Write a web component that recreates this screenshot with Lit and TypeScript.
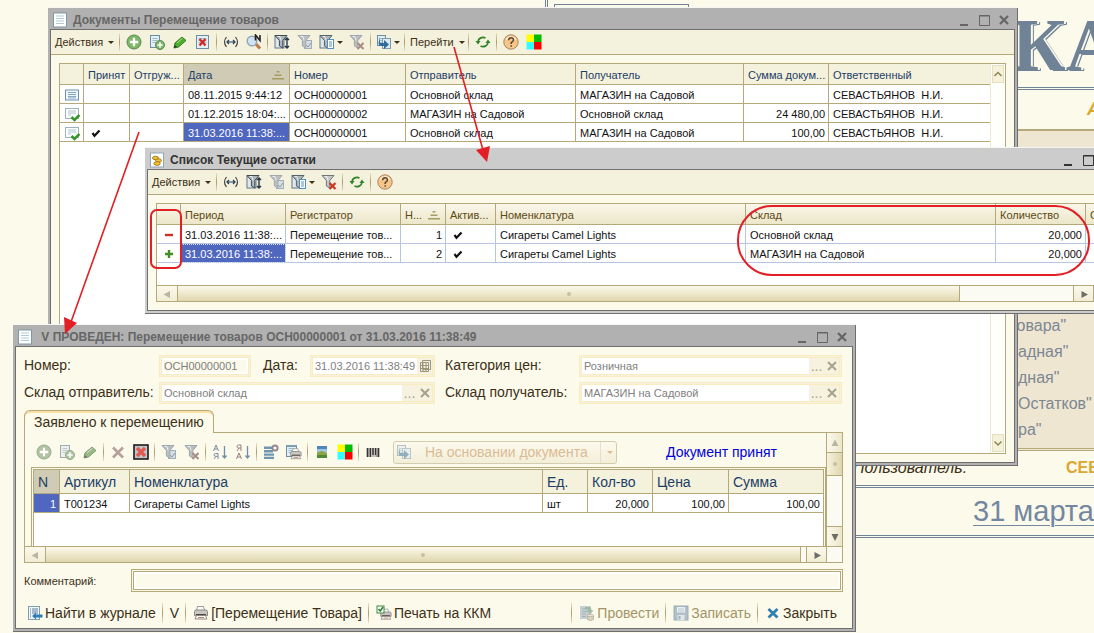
import { LitElement, html, svg, css, nothing, TemplateResult } from "lit";
import { customElement, property } from "lit/decorators.js";
import { classMap } from "lit/directives/class-map.js";

const funnel = (fill: string, stroke: string) => svg`
  <path d="M1 1.5h12L8.8 6.5v7.5l-3.4-2V6.500z" fill=${fill} stroke=${stroke}/>
  <path d="M3.500 2.500h2.500l1 4" stroke="#fff" stroke-opacity=".7" fill="none"/>`;
const plusDisc = (cx: number, cy: number, r: number) => svg`
  <circle cx=${cx} cy=${cy} r=${r} fill="#7db767" stroke="#5a8a50"/>
  <path d="M${cx - r * 0.6} ${cy}h${r * 1.2}M${cx} ${cy - r * 0.6}v${r * 1.2}" stroke="#fff" stroke-width=${r / 3}/>`;
const sheet = (x: number, y: number, w: number, h: number) => svg`
  <rect x=${x} y=${y} width=${w} height=${h} fill="#e3eef5" stroke="#6d8da3"/>
  <path d="M${x + 2} ${y + 3}h${w - 4}M${x + 2} ${y + 5}h${w - 4}M${x + 2} ${y + 7}h${w - 4}" stroke="#9db9cc"/>`;
const printer = svg`
  <path d="M4.500 1.500h6l1 4h-8z" fill="#fff" stroke="#999"/>
  <path d="M1.500 6.500q0-1.500 2-1.500h9q2 0 2 1.500v4h-13z" fill="#c9c6c2" stroke="#8d8883"/>
  <path d="M3 9h10v1.500H3z" fill="#4a4542"/>
  <path d="M3.500 10.500h9l1.500 3.500H2z" fill="#fff" stroke="#8d8883"/><path d="M5 12.500h6" stroke="#c08060"/>`;

const ICONS: Record<string, TemplateResult> = {
  add: svg`${plusDisc(8, 8, 7)}`,
  addCopy: svg`${sheet(1.5, 1.5, 9, 12)}${plusDisc(11, 11, 4.5)}`,
  pencil: svg`<path d="M2 14l1-5L10 3l4 3.500-7.500 6.500z" fill="#4fae2c" stroke="#2d7a1a"/><path d="M2 14l1-3 2 2z" fill="#333"/><path d="M5 9l5.500-5" stroke="#b5e69a"/>`,
  removeDoc: svg`${sheet(1.5, 1.5, 12, 13)}<path d="M4.500 5l6 6.500M10.500 5l-6 6.500" stroke="#d22a22" stroke-width="2.400"/>`,
  remove: svg`<path d="M3 3.500l10 10M13 3.500l-10 10" stroke="#b5a09a" stroke-width="2.600"/>`,
  removeBoxed: svg`<rect x="1" y="1" width="14" height="14" fill="#c3c3c8" stroke="#1c1c1c" stroke-width="1.600"/><path d="M4 4l8 8M12 4l-8 8" stroke="#e25a50" stroke-width="3.400"/>`,
  interval: svg`<path d="M3.500 3Q-.5 8 3.500 13M12.500 3q4 5 0 10" fill="none" stroke="#444" stroke-width="1.200"/><path d="M4 8h8M6 6L4 8l2 2M10 6l2 2-2 2" fill="none" stroke="#24405c" stroke-width="1.200"/>`,
  search: svg`<path d="M10 10l4 4.500" stroke="#bf7a48" stroke-width="3"/><circle cx="6" cy="7" r="4.800" fill="#d2e4f4" stroke="#93a5b5" stroke-width="1.400"/><path d="M9.500 6.500V1l4.500 5.500V1" fill="none" stroke="#222" stroke-width="1.600"/>`,
  filterList: svg`<rect x="1" y="2" width="9" height="12" fill="#dfe8ee" stroke="#647887"/>${funnel("#aeb6bb", "#3f4a52")}<path d="M13 4v10M11 6l2-2 2 2M11 12l2 2 2-2" fill="none" stroke="#24384a" stroke-width="1.400"/>`,
  filterBy: svg`<rect x="7.500" y="6.500" width="7" height="8" fill="#d4dde2" stroke="#a3afb7"/><path d="M9 11l2 2 3-4" fill="none" stroke="#8c9aa3"/>${funnel("#b9bfc2", "#a1a8ad")}`,
  filterHistory: svg`<rect x="1" y="2" width="8" height="12" fill="#dfe8ee" stroke="#647887"/>${funnel("#aeb6bb", "#56626a")}<rect x="8.500" y="5.500" width="6" height="9" fill="#fff" stroke="#5590bd"/><path d="M10 8h3M10 10h3M10 12h3" stroke="#5590bd"/>`,
  filterOff: svg`${funnel("#b9bec1", "#a1a6aa")}<path d="M8.500 9l6 6M14.500 9l-6 6" stroke="#a88c86" stroke-width="2"/>`,
  filterOffRed: svg`${funnel("#c4c8ca", "#70787c")}<path d="M8.500 9l6 6M14.500 9l-6 6" stroke="#cf3526" stroke-width="2.200"/>`,
  createOn: svg`${sheet(1.5, 1.5, 8, 10)}<rect x="6.500" y="4.500" width="8" height="10" fill="#dce9f2" stroke="#7f9db0"/><path d="M4 3v6h4V6l5 4.500L8 15v-3H3.500L2.500 9z" fill="#2f6c9d"/>`,
  refresh: svg`<path d="M3 7.500A5 4.500 0 0 1 10.500 4M13 8.500A5 4.500 0 0 1 5.500 12" fill="none" stroke="#2f8428" stroke-width="1.700"/><path d="M.5 7h5L3 10.500zM10.500 9h5L13 5.500z" fill="#2f8428"/>`,
  help: svg`<circle cx="8" cy="8" r="7.200" fill="#f6c588" stroke="#a98562"/><path d="M3 5.500Q8 0 13 5.500" fill="none" stroke="#fdebce" stroke-width="1.500"/><path d="M5.700 6.200q0-2.500 2.400-2.500t2.300 2.200Q10.400 7.300 8.200 8.600V10M8.200 11.200v1.600" fill="none" stroke="#5b4638" stroke-width="1.500"/>`,
  squares: svg`<path d="M.5.5H8V8H.5z" fill="#ff0"/><path d="M8 .5h7.500V8H8z" fill="#0b0"/><path d="M.5 8H8v7.500H.5z" fill="#3ff"/><path d="M8 8h7.500v7.500H8z" fill="#f00"/>`,
  sortAsc: svg`<path d="M1.500 7L4 1l2.500 6M2.500 5h3M6 15V9.500H3.500a1.400 1.400 0 0 0 0 2.800H6M4 12.300L2 15" fill="none" stroke="#7c8aa0"/><path d="M12.500 2v12M10.500 11.500l2 2.500 2-2.500" fill="none" stroke="#6f8fa8" stroke-width="1.300"/>`,
  sortDesc: svg`<path d="M1.500 15L4 9l2.500 6M2.500 13h3M6 7V1H3.500a1.400 1.400 0 0 0 0 3H6M4 4L2 7" fill="none" stroke="#9a7f82"/><path d="M12.500 2v12M10.500 11.500l2 2.500 2-2.500" fill="none" stroke="#6f8fa8" stroke-width="1.300"/>`,
  listSetup: svg`<path d="M1 2.500h9v2.500H1zM1 6h9v2.500H1zM1 9.500h10v2.200H1zM1 12.700h10v2.200H1z" fill="#6f95b2"/><circle cx="12" cy="4" r="2.600" fill="#fff" stroke="#95888f" stroke-width="2"/>`,
  printList: svg`${sheet(0.5, 1.5, 10, 11)}<path d="M0 1h11v2H0z" fill="#7f9db0"/><g transform="translate(3.500 3.500) scale(.8)">${printer}</g>`,
  picture: svg`<rect x="3" y="2" width="10" height="12" fill="#9cc6e6"/><path d="M3 2h10v3H3z" fill="#4f86b8"/><path d="M3 9h10v5H3z" fill="#4d8a33"/><path d="M3 8.500l5-1.500 5 2v2H3z" fill="#8ca544"/>`,
  barcode: svg`<path d="M2.500 4v9M5.500 4v9M8 4v7M10.500 4v7M13.500 4v9" stroke="#333" stroke-width="1.600"/><path d="M4 4v9M12 4v9M7 12h5" stroke="#333" stroke-width=".6"/>`,
  find: svg`<rect x="1.500" y="1.500" width="11" height="13" fill="#f1f7fb" stroke="#7f9db0"/><path d="M3 4h1M5 4h6M3 6h1M5 6h6M3 8h1M5 8h6M3 10h1M3 12h1" stroke="#5c7f99"/><path d="M5 11l4-3.500v2h6.500v3H9v2z" fill="#2f7fb5"/>`,
  printer,
  printKkm: svg`<g transform="translate(3.500 3) scale(.8)">${printer}</g><rect x="1" y="1" width="7" height="7" fill="#fff" stroke="#3a8a3a"/><path d="M2.500 4l1.700 2L7 2" fill="none" stroke="#2d7a2d" stroke-width="1.500"/>`,
  post: svg`<rect x="1" y="1" width="11" height="13" fill="#b9c6cf"/><path d="M3 4h5M3 6.500h5M3 9h4M3 11.500h4" stroke="#8fa2af"/><path d="M6 2h4q2.500 0 2.500 3.500h2L11 9 7.500 5.500h2q0-1.500-3.500-1.500z" fill="#8ba890"/><path d="M8.500 10.500v4q3 2 6 0v-4z" fill="#d3cdbb" stroke="#aaa590"/><ellipse cx="11.500" cy="10.500" rx="3" ry="1.300" fill="#e6e2d4" stroke="#aaa590"/>`,
  save: svg`<rect x="1" y="1" width="14" height="14" fill="#9db2c3" stroke="#8398a8"/><path d="M4 2h8v5.500H4z" fill="#e6edf1"/><path d="M5 4h6M5 6h6" stroke="#a9bccb"/><path d="M4.500 10h7v5h-7z" fill="#dde2e6"/><path d="M5.500 11h2v3.500h-2z" fill="#8da0b0"/>`,
  close: svg`<path d="M3.500 4l9 8.500M12.500 4l-9 8.500" stroke="#2f7fb0" stroke-width="2.800"/>`,
  docList: svg`<rect x="1.500" y="3" width="13" height="10" fill="#eef6fb" stroke="#6f93ad"/><path d="M4 5.500h8M4 7.500h8M4 9.500h8M4 11h8" stroke="#7aa0bd" stroke-width=".9"/>`,
  docPosted: svg`<rect x="1.500" y="2.500" width="13" height="10" fill="#fbfdfe" stroke="#9fb3bf"/><path d="M4 5h8M4 7h8M4 9h3" stroke="#a9bfcc" stroke-width=".9"/><path d="M7.500 11l3 3L15.500 9" fill="none" stroke="#38962a" stroke-width="2.600"/>`,
  paper: svg`<rect x="1.500" y="1" width="13" height="14" fill="#fdfefe" stroke="#7f98a8"/><path d="M4 4h8M4 6.500h8M4 9h8M4 11.500h8" stroke="#b5c8d5"/>`,
  coins: svg`<rect x="1.500" y="1" width="13" height="14" fill="#fff" stroke="#8fa5b5"/><ellipse cx="6.500" cy="6" rx="3" ry="1.700" fill="#f3c33a" stroke="#a87b14"/><ellipse cx="9.500" cy="8.500" rx="3" ry="1.700" fill="#f3c33a" stroke="#a87b14"/><ellipse cx="8" cy="11.500" rx="3.200" ry="1.800" fill="#f3c33a" stroke="#a87b14"/>`,
  tick: svg`<path d="M4.500 8l2 2.800L11.500 5.500" fill="none" stroke="#111" stroke-width="2.200"/>`,
  minus: svg`<path d="M4 8h8" stroke="#cf2f22" stroke-width="2.400"/>`,
  plus: svg`<path d="M4 8h8M8 4v8" stroke="#3f8f24" stroke-width="2.400"/>`,
  sort: svg`<path d="M6.500 4h3v1.500h-3zM4.500 7.500h7V9h-7zM2 11h12v1.500H2z" fill="#a69c62"/>`,
  calendar: svg`<path d="M5.500 2.500h8v9h-8zM3.500 4.500h8v9h-8zM3.500 7.500h8M3.500 10.500h8M6 4.500v9M9 4.500v9" fill="none" stroke="#98957c"/>`,
  clear: svg`<path d="M4 4l8 8M12 4l-8 8" stroke="#a5a289" stroke-width="2"/>`,
  minimize: svg`<path d="M4 13h8" stroke="currentColor" stroke-width="2"/>`,
  maximize: svg`<path d="M3.500 3.500h10v10h-10zM3 4h11" fill="none" stroke="currentColor"/>`,
  closeWin: svg`<path d="M4 4l8 8M12 4l-8 8" stroke="currentColor" stroke-width="2.200"/>`,
  up: svg`<path d="M4.500 10L8 6.500l3.500 3.500" fill="none" stroke="#8f8657" stroke-width="1.500"/>`,
  down: svg`<path d="M4.500 6.500L8 10l3.500-3.500" fill="none" stroke="#8f8657" stroke-width="1.500"/>`,
  triLeft: svg`<path d="M11 5v7L4.500 8.500z" fill="#b9b59f"/>`,
  triRight: svg`<path d="M5.500 5v7L12 8.500z" fill="#6d6d68"/>`,
  triUp: svg`<path d="M4.500 11h7L8 4.500z" fill="#b9b59f"/>`,
  triDown: svg`<path d="M4.500 5h7L8 12z" fill="#6d6d68"/>`,
};

const icon = (name: string) =>
  html`<svg class="icon" viewBox="0 0 16 16" width="16" height="16" aria-hidden="true">${ICONS[name]}</svg>`;

const base = css`
  * { box-sizing: border-box; }
  .icon { display: block; flex: none; }
  button { font: inherit; color: inherit; background: none; border: 0; padding: 0; margin: 0; }
`;

@customElement("desk-window")
class DeskWindow extends LitElement {
  @property() heading = "";
  @property() glyph = "paper";
  @property({ type: Boolean }) active = false;

  static styles = [base, css`
    :host { display: flex; flex-direction: column; box-sizing: border-box; color: #666;
      background: #b1b1b1; border: solid #6f6f6f; border-width: 0 1px 1px 0; padding: 0 2px 2px; box-shadow: 0 -1px #f6f6f4; }
    :host([active]) { background: #ccc; color: #333; }
    .bar { display: flex; align-items: center; height: 21px; padding: 2px 3px 0 2px; gap: 5px; }
    h2 { flex: 1; margin: 0; font: bold 12px/16px "Liberation Sans", sans-serif; white-space: pre; overflow: hidden; }
    .controls { display: flex; gap: 4px; }
    .body { flex: 1; display: flex; flex-direction: column; background: #fcfaeb; border: 1px solid #6f6f6f; min-height: 0; }
  `];

  render() {
    return html`
      <header class="bar">
        ${icon(this.glyph)}
        <h2>${this.heading}</h2>
        <div class="controls">
          <button aria-label="Свернуть">${icon("minimize")}</button>
          <button aria-label="Развернуть">${icon("maximize")}</button>
          <button aria-label="Закрыть">${icon("closeWin")}</button>
        </div>
      </header>
      <div class="body"><slot></slot></div>`;
  }
}

type Cell = string | TemplateResult | typeof nothing;
interface Column { title: Cell; width?: number; right?: boolean; sorted?: boolean; }

const DOC_COLUMNS: Column[] = [
  { title: "", width: 24 }, { title: "Принят", width: 46 }, { title: "Отгруж...", width: 54 },
  { title: "Дата", width: 106, sorted: true }, { title: "Номер", width: 116 },
  { title: "Отправитель", width: 170 }, { title: "Получатель", width: 168 },
  { title: "Сумма докум...", width: 85, right: true }, { title: "Ответственный" },
];
const DOCS: Cell[][] = [
  [icon("docList"), "", "", "08.11.2015 9:44:12", "ОСН00000001", "Основной склад", "МАГАЗИН на Садовой", "", "СЕВАСТЬЯНОВ  Н.И."],
  [icon("docPosted"), "", "", "01.12.2015 18:04:...", "ОСН00000002", "МАГАЗИН на Садовой", "Основной склад", "24 480,00", "СЕВАСТЬЯНОВ  Н.И."],
  [icon("docPosted"), icon("tick"), "", "31.03.2016 11:38:...", "ОСН00000001", "Основной склад", "МАГАЗИН на Садовой", "100,00", "СЕВАСТЬЯНОВ  Н.И."],
];
const STOCK_COLUMNS: Column[] = [
  { title: "", width: 24 }, { title: "Период", width: 105 }, { title: "Регистратор", width: 115 },
  { title: "Н...", width: 45, right: true, sorted: true }, { title: "Актив...", width: 50 },
  { title: "Номенклатура", width: 250 }, { title: "Склад", width: 250 },
  { title: "Количество", width: 90, right: true }, { title: "С" },
];
const STOCK: Cell[][] = [
  [icon("minus"), "31.03.2016 11:38:...", "Перемещение тов...", "1", icon("tick"), "Сигареты Camel Lights", "Основной склад", "20,000", ""],
  [icon("plus"), "31.03.2016 11:38:...", "Перемещение тов...", "2", icon("tick"), "Сигареты Camel Lights", "МАГАЗИН на Садовой", "20,000", ""],
];
const ITEM_COLUMNS: Column[] = [
  { title: "N", width: 26, right: true, sorted: true }, { title: "Артикул", width: 70 }, { title: "Номенклатура" },
  { title: "Ед.", width: 45 }, { title: "Кол-во", width: 65, right: true },
  { title: "Цена", width: 76, right: true }, { title: "Сумма", width: 94, right: true },
];
const ITEMS: Cell[][] = [["1", "Т001234", "Сигареты Camel Lights", "шт", "20,000", "100,00", "100,00"]];

@customElement("app-root")
class AppRoot extends LitElement {
  static styles = [base, css`
    :host { display: block; position: relative; overflow: hidden; height: 100vh; background: #fcfaeb;
      font: 11px/16px "Liberation Sans", Arial, sans-serif; color: #111; }

    .home { margin-left: 545px; border-left: 3px double #708396; height: 540px; white-space: nowrap; overflow: hidden; color: #7d8794; }
    .home-row { display: grid; align-items: center; overflow: hidden; }
    .brand { grid-template-columns: 6px 135px 323px 1fr; height: 90px; border-bottom: 3px double #708396; }
    .frame { grid-column: 2; align-self: end; height: 86px; border: solid #708396; border-width: 1px 1px 0; }
    .logo { grid-column: 4; font: bold 74px/90px "Liberation Serif", serif; color: #708396; text-shadow: 2px 0 #fcfaeb, 3px 1px #708396; }
    .caption { padding-left: 539px; height: 39px; font: italic bold 18px/39px "Liberation Sans", sans-serif; color: #dca630; }
    .links { margin: 0; list-style: none; padding: 182px 0 5px 470px; height: 322px; background: #eee6d0;
      border: solid #b5a97a; border-width: 2px 0; border-bottom: 3px double #b5a97a; font-size: 16px; line-height: 26px; }
    .tucked { margin-left: -10px; }
    .user { grid-template-columns: 213px 1fr; padding-left: 305px; height: 37px; border-bottom: 3px double #708396; }
    .user em { font-size: 16px; color: #3c3018; }
    .user b { font-size: 16px; color: #dca630; }
    .day { padding-left: 425px; height: 50px; border-bottom: 3px double #708396; }
    .day a { font-size: 29px; line-height: 46px; color: #7487a0; text-underline-offset: 4px; text-decoration-thickness: 1px; }

    desk-window { position: absolute; }
    .docs { left: 48px; top: 8px; width: 970px; height: 458px; }
    .stock { left: 145px; top: 148px; right: -28px; }
    .doc { left: 13px; top: 325px; width: 843px; }
    .marks { position: absolute; left: 0; top: 0; pointer-events: none; }

    .toolbar { display: flex; align-items: center; height: 25px; padding-left: 4px; background: #f4f1dc; border-bottom: 1px solid #b5a97a; color: #3c3018; }
    .tool { display: flex; align-items: center; justify-content: center; width: 23px; height: 22px; }
    .tool.drop { width: 29px; }
    .menu { display: flex; align-items: center; gap: 3px; white-space: nowrap; }
    .menu.actions { width: 60px; }
    .menu.go { width: 53px; margin: 0 3px; }
    .caret { flex: none; border: solid transparent; border-width: 3px 3px 0; border-top-color: currentColor; margin-left: 2px; }
    .sep { flex: none; width: 1px; height: 18px; margin: 0 2px; background: linear-gradient(#e8e2c4, #a79b6a, #e8e2c4); }
    .actions + .sep { margin-left: 4px; }
    .plain { background: none; border: 0; height: 34px; padding: 4px 0 0 7px; }
    .muted { opacity: .7; filter: saturate(.5); }

    .box { display: flex; margin: 8px; border: 1px solid #b5a97a; background: #fff; min-height: 0; }
    .docs .box { flex: 1; }
    .scroll { flex: 1; min-width: 0; background: #fff; }
    table { width: 100%; table-layout: fixed; border-collapse: separate; border-spacing: 0; color: #111; }
    th, td { border: solid #b5a97a; border-width: 0 1px 1px 0; padding: 1px 3px 0 4px; height: 19px; line-height: 16px; overflow: hidden; white-space: pre; text-align: left; font-weight: normal; }
    th { height: 21px; background: #f4f1dc; color: #1c3d66; }
    th:last-child, td:last-child { border-right: 0; }
    td.right { text-align: right; }
    th .head { display: flex; justify-content: space-between; align-items: center; }
    th.sorted { background: #cfcbb5; }
    td.sel { background: #5067c0; color: #fff; }
    .stock th { background: linear-gradient(#faf7ea, #ece6c9); color: #5c4a14; }
    .stock td { border-color: #b4c6e2; }
    .stock .sel { outline: 1px dotted #dfe4f5; outline-offset: -1px; }

    .rail { display: flex; flex-direction: column; justify-content: space-between; width: 15px; padding: 1px; border-left: 1px solid #eee9d0; background: #fffffc; }
    .rail button { height: 18px; display: flex; justify-content: center; align-items: center; background: #f5f1db; border: 1px solid #e5dfbd; overflow: hidden; }

    .stock .box { flex-direction: column; height: 99px; }
    .hbar { display: flex; height: 16px; border-top: 1px solid #b5a97a; background: #fbfaf3; }
    .hbar button { width: 21px; display: flex; align-items: center; justify-content: center; border: solid #b5a97a; border-width: 0 1px 0 0; background: linear-gradient(#fbf9ec, #f1ecd4); }
    .hbar .end { border-width: 0 1px; }
    .thumb { display: flex; align-items: center; justify-content: center; border: solid #b5a97a; border-width: 0 1px 0 0; background: linear-gradient(#faf8ec, #efe9cc 50%, #ded6ae); }
    .thumb::after { content: ""; width: 4px; height: 4px; border-radius: 2px; background: #c9c19c; }
    .thumb.main { flex: 1; }
    .stock .gap { width: 113px; }
    .corner { width: 15px; }

    .form { display: grid; grid-template-columns: 135px 276px 144px 1fr; grid-auto-rows: 22px; row-gap: 5px; padding: 8px 10px 6px 8px; font-size: 14px; color: #3c3018; }
    .form label { line-height: 20px; white-space: nowrap; }
    .form .far { padding-left: 10px; }
    .pair { display: flex; justify-content: space-between; }
    .field { display: flex; align-items: center; border: 3px double #f9edc0; background: #f6f2df; min-width: 0; }
    .field input { flex: 1; align-self: stretch; min-width: 0; border: 0; margin: 0; padding: 0 2px; background: #fff; font: 11px/16px "Liberation Sans", sans-serif; color: #808080; }
    .field button { color: #a5a289; width: 15px; line-height: 12px; font-size: 14px; }
    .field.number { width: 92px; }
    .field.number input { background: #fcfaeb; box-shadow: inset 0 0 0 2px #fff; }
    .field.date { width: 125px; }

    .tab { align-self: flex-start; margin: 0 0 -1px 8px; height: 23px; padding: 0 9px; border: 1px solid #b5a97a; border-bottom: 0; border-radius: 6px 6px 0 0; background: #fcfaeb; box-shadow: inset 0 2px #f8dfa4; font-size: 14px; color: #3c3018; line-height: 22px; position: relative; }
    .pane { margin: 0 9px 0 8px; border: 1px solid #b5a97a; }
    .pane-main { display: flex; }
    .pane-left { flex: 1; min-width: 0; }
    .items { margin-left: 6px; height: 79px; border: solid #b5a97a; border-width: 1px 1px 0; padding: 1px 1px 0; background: #fcfaeb; }
    .items-in { height: 77px; border: solid #b5a97a; border-width: 1px 1px 0; background: #fff; }
    .items th { height: 24px; font-size: 14px; }
    .vbar { width: 16px; display: flex; flex-direction: column; border-left: 1px solid #b5a97a; background: #fbfaf3; }
    .vbar button { height: 20px; display: flex; align-items: center; justify-content: center; border-bottom: 1px solid #b5a97a; background: linear-gradient(90deg, #fbf9ec, #ece6c9); overflow: hidden; }
    .vbar .thumb { height: 23px; border-width: 0 0 1px; background: linear-gradient(90deg, #f6f2dc, #ded6ae); }
    .vbar .last { margin-top: auto; border: 0; border-top: 1px solid #b5a97a; }
    .doc .gap { width: 5px; }
    .based { display: flex; align-items: center; width: 224px; height: 23px; margin-left: 9px; border: 1px solid #d3cdb0; border-radius: 3px; color: #dcbb94; font-size: 14px; background: linear-gradient(#fcfaee, #f3eed8); padding-left: 2px; }
    .based .icon { opacity: .5; }
    .based .text { flex: 1; padding-left: 13px; text-align: left; white-space: nowrap; }
    .based .arrow { width: 16px; height: 21px; border-left: 1px solid #e6e0c8; display: flex; align-items: center; justify-content: center; }
    .state { margin-left: 49px; font-size: 14px; color: #0000e0; }

    .comment { display: grid; grid-template-columns: 107px 1fr; align-items: center; padding: 6px 9px 0 8px; color: #3c3018; }
    .comment input { height: 23px; width: 100%; border: 3px double #b5a97a; margin: 0; background: #fcfaeb; box-shadow: inset 0 0 0 2px #fff; font: inherit; padding: 0 4px; }
    .footer { display: flex; align-items: center; height: 36px; padding: 6px 15px 0 11px; font-size: 14px; color: #3c3018; }
    .footer button { display: flex; align-items: center; gap: 2px; white-space: nowrap; }
    .footer .sep { margin: 0 7px 0 6px; height: 20px; }
    .footer .off { color: #a39567; }
    .footer .off .icon { opacity: .8; }
    .push { margin-left: auto; }
  `];

  private tool(name: string, label: string, o: { drop?: boolean; muted?: boolean } = {}) {
    return html`<button class=${classMap({ tool: true, drop: !!o.drop, muted: !!o.muted })} aria-label=${label}>
      ${icon(name)}${o.drop ? html`<span class="caret"></span>` : nothing}</button>`;
  }

  private sep() { return html`<span class="sep"></span>`; }

  private grid(columns: Column[], rows: Cell[][], selected: [number, number]) {
    return html`<table>
      <colgroup>${columns.map((c) => html`<col width=${c.width ?? nothing}>`)}</colgroup>
      <thead><tr>${columns.map((c) => html`<th class=${classMap({ sorted: !!c.sorted })}>${
        c.sorted && c.title !== "N" ? html`<span class="head">${c.title}${icon("sort")}</span>` : c.title}</th>`)}</tr></thead>
      <tbody>${rows.map((r, y) => html`<tr>${r.map((cell, x) => html`<td class=${classMap({
        right: !!columns[x].right, sel: y === selected[0] && x === selected[1] })}>${cell}</td>`)}</tr>`)}</tbody>
    </table>`;
  }

  private hbar() {
    return html`<div class="hbar">
      <button aria-label="Влево">${icon("triLeft")}</button><div class="thumb main"></div><div class="gap"></div>
      <button class="end" aria-label="Вправо">${icon("triRight")}</button><div class="corner"></div></div>`;
  }

  private home() {
    return html`<main class="home">
      <div class="home-row brand"><div class="frame"></div><div class="logo">КА</div></div>
      <div class="caption">А</div>
      <ul class="links">
        <li class="tucked">Товара"</li><li>адная"</li><li>дная"</li><li>Остатков"</li><li>ра"</li>
      </ul>
      <div class="home-row user"><em>Пользователь:</em><b>СЕВ</b></div>
      <div class="day"><a href="#day">31 марта</a></div>
    </main>`;
  }

  private docs() {
    return html`<desk-window class="docs" heading="Документы Перемещение товаров">
      <div class="toolbar">
        <button class="menu actions">Действия<span class="caret"></span></button>${this.sep()}
        ${this.tool("add", "Добавить")}${this.tool("addCopy", "Скопировать")}${this.tool("pencil", "Изменить")}${this.tool("removeDoc", "Удалить")}
        ${this.sep()}${this.tool("interval", "Интервал")}${this.tool("search", "Поиск по номеру")}
        ${this.sep()}${this.tool("filterList", "Отбор")}${this.tool("filterBy", "Отбор по значению")}${this.tool("filterHistory", "История отборов", { drop: true })}${this.tool("filterOff", "Отключить отбор")}
        ${this.sep()}${this.tool("createOn", "Ввести на основании", { drop: true })}
        ${this.sep()}<button class="menu go">Перейти<span class="caret"></span></button>
        ${this.sep()}${this.tool("refresh", "Обновить")}${this.sep()}${this.tool("help", "Справка")}${this.tool("squares", "Цвета")}
      </div>
      <div class="box">
        <div class="scroll">${this.grid(DOC_COLUMNS, DOCS, [2, 3])}</div>
        <div class="rail"><button aria-label="Вверх">${icon("up")}</button><button aria-label="Вниз">${icon("down")}</button></div>
      </div>
    </desk-window>`;
  }

  private stock() {
    return html`<desk-window class="stock" active glyph="coins" heading="Список Текущие остатки">
      <div class="toolbar">
        <button class="menu actions">Действия<span class="caret"></span></button>${this.sep()}
        ${this.tool("interval", "Интервал")}${this.tool("filterList", "Отбор")}${this.tool("filterBy", "Отбор по значению")}${this.tool("filterHistory", "История отборов", { drop: true })}${this.tool("filterOffRed", "Отключить отбор")}
        ${this.sep()}${this.tool("refresh", "Обновить")}${this.sep()}${this.tool("help", "Справка")}
      </div>
      <div class="box"><div class="scroll">${this.grid(STOCK_COLUMNS, STOCK, [1, 1])}</div>${this.hbar()}</div>
    </desk-window>`;
  }

  private pick(id: string, value: string) {
    return html`<div class="field"><input id=${id} .value=${value} readonly>
      <button aria-label="Выбрать">...</button><button aria-label="Очистить">${icon("clear")}</button></div>`;
  }

  private doc() {
    return html`<desk-window class="doc" heading=" V ПРОВЕДЕН: Перемещение товаров ОСН00000001 от 31.03.2016 11:38:49">
      <div class="form">
        <label for="num">Номер:</label>
        <div class="pair">
          <div class="field number"><input id="num" .value=${"ОСН00000001"} readonly></div>
          <label for="date">Дата:</label>
          <div class="field date"><input id="date" .value=${"31.03.2016 11:38:49"} readonly><button aria-label="Календарь">${icon("calendar")}</button></div>
        </div>
        <label class="far" for="price">Категория цен:</label>${this.pick("price", "Розничная")}
        <label for="from">Склад отправитель:</label>${this.pick("from", "Основной склад")}
        <label class="far" for="to">Склад получатель:</label>${this.pick("to", "МАГАЗИН на Садовой")}
      </div>
      <button class="tab">Заявлено к перемещению</button>
      <section class="pane">
        <div class="pane-main">
          <div class="pane-left">
            <div class="toolbar plain">
              ${this.tool("add", "Добавить", { muted: true })}${this.tool("addCopy", "Скопировать", { muted: true })}${this.tool("pencil", "Изменить", { muted: true })}
              ${this.sep()}${this.tool("remove", "Удалить")}${this.tool("removeBoxed", "Удалить все")}
              ${this.sep()}${this.tool("filterBy", "Отбор")}${this.tool("filterOff", "Отключить отбор")}
              ${this.sep()}${this.tool("sortAsc", "По возрастанию")}${this.tool("sortDesc", "По убыванию")}
              ${this.sep()}${this.tool("listSetup", "Настройка списка")}${this.tool("printList", "Вывести список")}
              ${this.sep()}${this.tool("picture", "Картинка")}${this.tool("squares", "Цвета")}
              ${this.sep()}${this.tool("barcode", "Штрихкод")}
              <button class="based">${icon("createOn")}<span class="text">На основании документа</span><span class="arrow"><span class="caret"></span></span></button>
              <span class="state">Документ принят</span>
            </div>
            <div class="items"><div class="items-in">${this.grid(ITEM_COLUMNS, ITEMS, [0, 0])}</div></div>
          </div>
          <div class="vbar"><button aria-label="Вверх">${icon("triUp")}</button><div class="thumb"></div><button class="last" aria-label="Вниз">${icon("triDown")}</button></div>
        </div>
        ${this.hbar()}
      </section>
      <div class="comment"><label for="note">Комментарий:</label><input id="note"></div>
      <footer class="footer">
        <button>${icon("find")}Найти в журнале</button>${this.sep()}<button>V</button>${this.sep()}
        <button>${icon("printer")}[Перемещение Товара]</button>${this.sep()}<button>${icon("printKkm")}Печать на ККМ</button>
        <span class="push"></span>${this.sep()}<button class="off">${icon("post")}Провести</button>${this.sep()}
        <button class="off">${icon("save")}Записать</button>${this.sep()}<button>${icon("close")}Закрыть</button>
      </footer>
    </desk-window>`;
  }

  render() {
    return html`${this.home()}${this.docs()}${this.stock()}${this.doc()}
      <svg class="marks" width="1094" height="633" viewBox="0 0 1094 633" fill="none" stroke="#e31e24" stroke-width="2" aria-hidden="true">
        <path d="M454 47L483 150M139 132L71 322" stroke-width="1.600"/>
        <path d="M476 150l14-4-3 16zM64 317l13 6-12 11z" fill="#e31e24" stroke="none"/>
        <rect x="151" y="210" width="30" height="58" rx="6"/>
        <rect x="738" y="206" width="351" height="69" rx="34"/>
      </svg>`;
  }
}
